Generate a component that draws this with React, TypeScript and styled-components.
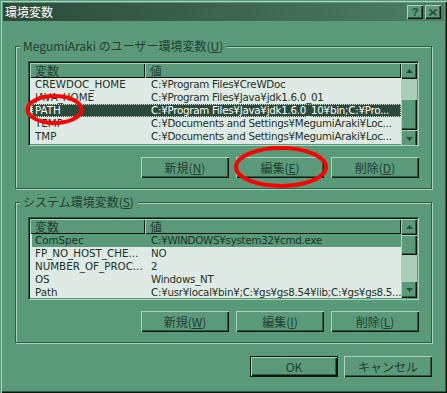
import styled, { createGlobalStyle } from "styled-components";

const FACE = "#5a9a7a";
const LIGHT = "#a9d3be";
const SHADE = "#2f5c47";
const BLACK = "#0b1610";
const TEXT = "#243e31";
const ROWTEXT = "#1c3226";
const LISTBG = "#dfeae5";
const SELECT = "#2b4a3a";
const TRACK = "#a9cdb9";
const FONT = `"Noto Sans CJK JP", "Noto Sans", sans-serif`;
const LISTFONT = `"DejaVu Sans", "Noto Sans CJK JP", sans-serif`;

const GlobalStyle = createGlobalStyle`
    body {
        margin: 0;
        background: ${FACE};
        font-family: ${FONT};
    }
`;

const Swindow = styled.div`
    position: relative;
    width: 447px;
    height: 393px;
    box-sizing: border-box;
    padding: 3px;
    background: ${FACE};
    box-shadow: inset 1px 1px 0 ${FACE}, inset 2px 2px 0 ${LIGHT}, inset -1px -1px 0 ${BLACK}, inset -2px -2px 0 ${SHADE};
    display: flex;
    flex-direction: column;
`;
const StitleBar = styled.div`
    height: 18px;
    display: flex;
    align-items: center;
    padding: 0 3px 0 2px;
    background: linear-gradient(to right, #2c4a3b, #4c7e65);
`;
const Stitle = styled.span`
    flex: 1;
    color: #ffffff;
    font-size: 12px;
    line-height: 18px;
`;
const StitleButton = styled.div`
    width: 16px;
    height: 14px;
    box-sizing: border-box;
    margin-left: 2px;
    background: ${FACE};
    box-shadow: inset 1px 1px 0 ${LIGHT}, inset -1px -1px 0 ${BLACK}, inset -2px -2px 0 ${SHADE};
    display: flex;
    align-items: center;
    justify-content: center;
    color: ${SELECT};
    font: bold 11px "Liberation Sans", sans-serif;
`;
const Sbody = styled.div`
    flex: 1;
    display: flex;
    flex-direction: column;
    padding: 0 12px;
`;
const Sgroup = styled.fieldset<{ $top: number }>`
    margin: ${(p) => p.$top}px 0 0 0;
    padding: 8px 12px 10px 12px;
    min-width: 0;
    border: 1px solid ${SHADE};
    box-shadow: 1px 1px 0 ${LIGHT}, inset 1px 1px 0 ${LIGHT};
`;
const Slegend = styled.legend`
    margin-left: -8px;
    padding: 0 4px 0 3px;
    height: 14px;
    line-height: 14px;
    font-size: 12px;
    color: ${TEXT};
    background: ${FACE};
`;
const SlistView = styled.div<{ $height: number }>`
    height: ${(p) => p.$height}px;
    box-sizing: border-box;
    border-top: 1px solid ${SHADE};
    border-left: 1px solid ${SHADE};
    border-right: 1px solid ${LIGHT};
    border-bottom: 1px solid ${LIGHT};
    box-shadow: inset 1px 1px 0 ${BLACK}, inset -1px -1px 0 ${FACE};
    padding: 1px;
    background: ${LISTBG};
    display: flex;
    overflow: hidden;
`;
const SlistMain = styled.div`
    flex: 1;
    min-width: 0;
    display: flex;
    flex-direction: column;
    overflow: hidden;
`;
const SheaderRow = styled.div`
    display: grid;
    grid-template-columns: 115px 1fr;
    height: 15px;
    flex-shrink: 0;
`;
const SheaderCell = styled.div`
    background: ${FACE};
    box-shadow: inset 1px 1px 0 ${LIGHT}, inset -1px -1px 0 ${BLACK};
    padding-left: 5px;
    font-size: 12px;
    line-height: 15px;
    color: ${TEXT};
    overflow: hidden;
`;
const Srow = styled.div<{ $state?: "focus" | "select" }>`
    display: grid;
    grid-template-columns: 113px 1fr;
    height: 13px;
    flex-shrink: 0;
    margin-left: 2px;
    box-sizing: border-box;
    font-family: ${LISTFONT};
    font-size: 10.3px;
    line-height: 13px;
    color: ${(p) => (p.$state === "focus" ? "#ffffff" : ROWTEXT)};
    background: ${(p) => (p.$state === "focus" ? SELECT : p.$state === "select" ? FACE : "transparent")};
    outline: ${(p) => (p.$state === "focus" ? "1px dotted #cfe3d8" : "none")};
    outline-offset: -1px;
`;
const Scell = styled.div`
    padding-left: 3px;
    white-space: nowrap;
    overflow: hidden;
    & + & {
        padding-left: 6px;
        letter-spacing: -0.26px;
    }
`;
const SscrollBar = styled.div`
    width: 16px;
    flex-shrink: 0;
    display: flex;
    flex-direction: column;
    background: ${TRACK};
`;
const SscrollButton = styled.div<{ $height: number }>`
    height: ${(p) => p.$height}px;
    flex-shrink: 0;
    background: ${FACE};
    box-shadow: inset 1px 1px 0 ${LIGHT}, inset -1px -1px 0 ${BLACK}, inset -2px -2px 0 ${SHADE};
    display: flex;
    align-items: center;
    justify-content: center;
`;
const Sspacer = styled.div<{ $height?: number }>`
    flex: ${(p) => (p.$height === undefined ? 1 : "none")};
    height: ${(p) => (p.$height === undefined ? "auto" : `${p.$height}px`)};
`;
const SbuttonRow = styled.div<{ $top: number }>`
    display: flex;
    justify-content: flex-end;
    gap: 7px;
    margin-top: ${(p) => p.$top}px;
`;
const Sbutton = styled.button<{ $default?: boolean }>`
    width: 88px;
    height: 21px;
    padding: 0;
    border: ${(p) => (p.$default ? `1px solid ${BLACK}` : "none")};
    background: ${FACE};
    box-shadow: inset 1px 1px 0 ${LIGHT}, inset -1px -1px 0 ${BLACK}, inset -2px -2px 0 ${SHADE};
    font-family: ${FONT};
    font-size: 12px;
    color: ${TEXT};
    line-height: 19px;
    u {
        text-decoration: underline;
        text-underline-offset: 1px;
    }
`;
const Sfooter = styled.div`
    display: flex;
    justify-content: flex-end;
    gap: 6px;
    margin-top: 13px;
`;
const Sannotation = styled.svg`
    position: absolute;
    left: 0;
    top: 0;
    pointer-events: none;
`;

type Item = { name: string; value: string; state?: "focus" | "select" };

const userVars: Item[] = [
    { name: "CREWDOC_HOME", value: "C:¥Program Files¥CreWDoc" },
    { name: "JAVA_HOME", value: "C:¥Program Files¥Java¥jdk1.6.0_01" },
    { name: "PATH", value: "C:¥Program Files¥Java¥jdk1.6.0_10¥bin;C:¥Pro...", state: "focus" },
    { name: "TEMP", value: "C:¥Documents and Settings¥MegumiAraki¥Loc..." },
    { name: "TMP", value: "C:¥Documents and Settings¥MegumiAraki¥Loc..." },
];
const systemVars: Item[] = [
    { name: "ComSpec", value: "C:¥WINDOWS¥system32¥cmd.exe", state: "select" },
    { name: "FP_NO_HOST_CHE...", value: "NO" },
    { name: "NUMBER_OF_PROC...", value: "2" },
    { name: "OS", value: "Windows_NT" },
    { name: "Path", value: "C:¥usr¥local¥bin¥;C:¥gs¥gs8.54¥lib;C:¥gs¥gs8.5..." },
    { name: "PATHEXT", value: ".COM;.EXE;.BAT;.CMD;.VBS;.VBE;.JS;.J..." },
];

const Arrow = ({ up }: { up: boolean }) => (
    <svg width="7" height="4" viewBox="0 0 7 4">
        <polygon points={up ? "3.5,0 7,4 0,4" : "0,0 7,0 3.5,4"} fill={SELECT} />
    </svg>
);

const ListView = ({ items, height, thumbTop, thumbHeight }: { items: Item[]; height: number; thumbTop: number; thumbHeight: number }) => (
    <SlistView $height={height}>
        <SlistMain>
            <SheaderRow>
                <SheaderCell>変数</SheaderCell>
                <SheaderCell>値</SheaderCell>
            </SheaderRow>
            {items.map((item, index) => (
                <Srow key={index} $state={item.state}>
                    <Scell>{item.name}</Scell>
                    <Scell>{item.value}</Scell>
                </Srow>
            ))}
        </SlistMain>
        <SscrollBar>
            <SscrollButton $height={16}><Arrow up /></SscrollButton>
            <Sspacer $height={thumbTop} />
            <SscrollButton $height={thumbHeight} />
            <Sspacer />
            <SscrollButton $height={17}><Arrow up={false} /></SscrollButton>
        </SscrollBar>
    </SlistView>
);

const App = () => {
    return (
        <>
            <GlobalStyle />
            <Swindow>
                <StitleBar>
                    <Stitle>環境変数</Stitle>
                    <StitleButton>?</StitleButton>
                    <StitleButton>
                        <svg width="8" height="7" viewBox="0 0 8 7">
                            <path d="M0.5 0.5 L7.5 6.5 M7.5 0.5 L0.5 6.5" stroke={SELECT} strokeWidth="1.6" />
                        </svg>
                    </StitleButton>
                </StitleBar>
                <Sbody>
                    <Sgroup $top={18}>
                        <Slegend>MegumiAraki のユーザー環境変数(<u>U</u>)</Slegend>
                        <ListView items={userVars} height={85} thumbTop={20} thumbHeight={31} />
                        <SbuttonRow $top={11}>
                            <Sbutton>新規(<u>N</u>)</Sbutton>
                            <Sbutton>編集(<u>E</u>)</Sbutton>
                            <Sbutton>削除(<u>D</u>)</Sbutton>
                        </SbuttonRow>
                    </Sgroup>
                    <Sgroup $top={6}>
                        <Slegend>システム環境変数(<u>S</u>)</Slegend>
                        <ListView items={systemVars} height={83} thumbTop={0} thumbHeight={20} />
                        <SbuttonRow $top={11}>
                            <Sbutton>新規(<u>W</u>)</Sbutton>
                            <Sbutton>編集(<u>I</u>)</Sbutton>
                            <Sbutton>削除(<u>L</u>)</Sbutton>
                        </SbuttonRow>
                    </Sgroup>
                    <Sfooter>
                        <Sbutton $default>OK</Sbutton>
                        <Sbutton>キャンセル</Sbutton>
                    </Sfooter>
                </Sbody>
                <Sannotation width="447" height="393">
                    <ellipse cx="54.5" cy="109.5" rx="27" ry="13.5" fill="none" stroke="#ff0000" strokeWidth="4" />
                    <ellipse cx="281" cy="167" rx="45" ry="19" fill="none" stroke="#ff0000" strokeWidth="4" />
                </Sannotation>
            </Swindow>
        </>
    );
};

export default App;
